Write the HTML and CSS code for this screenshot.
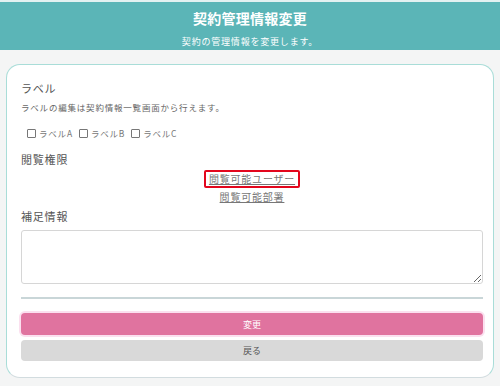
FILE: index.html
```html
<!DOCTYPE html>
<html lang="ja">
<head>
    <meta charset="UTF-8">
    <meta name="viewport" content="width=device-width, initial-scale=1.0">
    <title>契約管理情報変更</title>
    <link rel="stylesheet" href="styles.css">
</head>
<body>
    <div class="header">
        <h1>契約管理情報変更</h1>
        <p>契約の管理情報を変更します。</p>
    </div>
    <div class="card">
        <div class="label">ラベル</div>
        <p class="note">ラベルの編集は契約情報一覧画面から行えます。</p>
        <div class="checks">
            <label><span class="box"></span>ラベルA</label>
            <label><span class="box"></span>ラベルB</label>
            <label><span class="box"></span>ラベルC</label>
        </div>
        <div class="label perm">閲覧権限</div>
        <div class="links">
            <a href="#" class="marked">閲覧可能ユーザー</a>
            <a href="#">閲覧可能部署</a>
        </div>
        <div class="label extra">補足情報</div>
        <textarea class="memo"></textarea>
        <hr>
        <button class="btn change">変更</button>
        <button class="btn back">戻る</button>
    </div>
</body>
</html>
```
FILE: styles.css
```css
body{
    margin: 0;
    background: #f4f5f5;
    font-family: "Noto Sans CJK JP", "Noto Sans", sans-serif;
    color: #555;
    letter-spacing: 0.05em;
}
.header{
    background: #5bb5b7;
    border-top: 2px solid #e3f1f1;
    color: white;
    text-align: center;
    height: 48px;
}
.header h1{
    margin: 0;
    padding-top: 6px;
    font-size: 14px;
    line-height: 20px;
    font-weight: bold;
    letter-spacing: 0.02em;
}
.header p{
    margin: 0;
    margin-top: 7px;
    font-size: 9px;
    line-height: 14px;
}
.card{
    margin: 14px 6px 0 6px;
    background: white;
    border: 1px solid #a9ddd8;
    border-bottom-color: #d2dcdf;
    border-radius: 14px;
    padding: 15px 10px 16px 14px;
}
.label{
    font-size: 11px;
    line-height: 16px;
    color: #555;
}
.note{
    margin: 4px 0 0 0;
    font-size: 8.5px;
    line-height: 14px;
    color: #666;
}
.checks{
    margin-top: 12px;
    padding-left: 6px;
    display: flex;
    gap: 6px;
    font-size: 8.5px;
    line-height: 14px;
    color: #777;
}
.checks label{
    display: flex;
    align-items: center;
}
.box{
    width: 7px;
    height: 7px;
    border: 1px solid #777;
    border-radius: 1px;
    margin-right: 3px;
}
.perm{
    margin-top: 11px;
}
.links{
    margin-top: 3px;
    display: flex;
    flex-direction: column;
    align-items: center;
    font-size: 10px;
    line-height: 14px;
}
.links a{
    color: #777;
    text-decoration: underline;
}
.links a.marked{
    border: 2px solid #e3061d;
    border-radius: 2px;
    padding: 0 3px;
}
.links a + a{
    margin-top: 2px;
}
.extra{
    margin-top: 4px;
}
.memo{
    display: block;
    box-sizing: border-box;
    width: 100%;
    height: 54px;
    margin-top: 6px;
    border: 1px solid #d6d6d6;
    border-radius: 3px;
    resize: vertical;
}
hr{
    margin: 13px 0 0 0;
    border: none;
    border-top: 2px solid #c9d6d8;
}
.btn{
    display: block;
    width: 100%;
    border: none;
    border-radius: 4px;
    font-family: inherit;
    font-size: 9px;
    height: 22px;
}
.change{
    margin-top: 14px;
    background: #e0739f;
    color: white;
    box-shadow: 0 0 0 2px #fbe0ef;
}
.back{
    margin-top: 5px;
    height: 21px;
    background: #d9d9d9;
    color: #555;
}
```
